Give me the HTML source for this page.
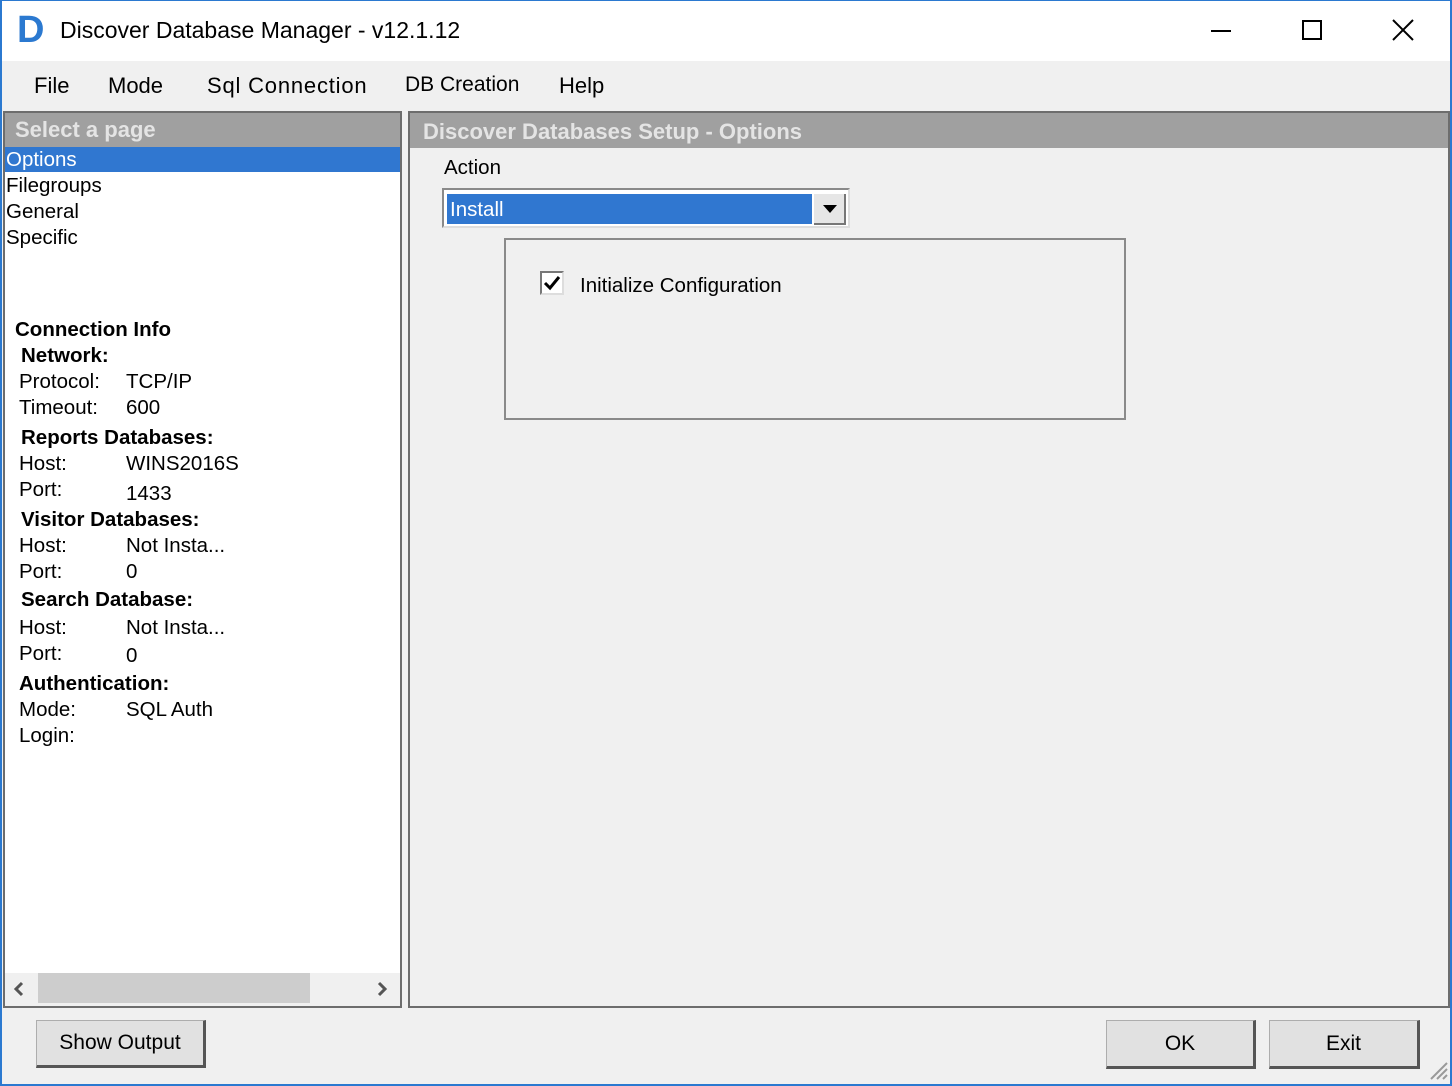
<!DOCTYPE html><html><head><style>
*{margin:0;padding:0;box-sizing:border-box}
body{width:1452px;height:1086px;overflow:hidden;background:#f0f0f0;font-family:"Liberation Sans",sans-serif;color:#000;position:relative}
.a{position:absolute;white-space:nowrap}
.t{font-size:20.5px}
.b{font-weight:bold}
.btn{position:absolute;background:#e1e1e1;border:1px solid #adadad;border-right:3px solid #555;border-bottom:3px solid #555;font-size:21px;text-align:center}
</style></head><body>
<div class="a" style="left:0;top:0;width:1452px;height:1086px;border:2px solid #2b79d0;border-top:1px solid #2b79d0"></div>
<div class="a" style="left:2px;top:1px;width:1448px;height:60px;background:#fff"></div>
<div class="a" style="left:17px;top:10px;font-size:38px;font-weight:bold;color:#2b79d0;line-height:40px">D</div>
<div class="a" style="left:60px;top:17px;font-size:23px">Discover Database Manager - v12.1.12</div>
<div class="a" style="left:1211px;top:30px;width:20px;height:2px;background:#000"></div>
<div class="a" style="left:1302px;top:20px;width:20px;height:20px;border:2px solid #000"></div>
<svg class="a" style="left:1392px;top:19px" width="22" height="22"><path d="M1 1L21 21M21 1L1 21" stroke="#000" stroke-width="2"/></svg>
<div class="a" style="left:34px;top:73px;font-size:22px">File</div>
<div class="a" style="left:108px;top:73px;font-size:22px">Mode</div>
<div class="a" style="left:207px;top:73px;font-size:22px;letter-spacing:0.8px">Sql Connection</div>
<div class="a" style="left:405px;top:73px;font-size:21px">DB Creation</div>
<div class="a" style="left:559px;top:73px;font-size:22px">Help</div>
<!-- left panel -->
<div class="a" style="left:3px;top:111px;width:399px;height:897px;background:#fff;border:2px solid #6d6d6d"></div>
<div class="a" style="left:5px;top:113px;width:395px;height:34px;background:#a0a0a0"></div>
<div class="a b" style="left:15px;top:117px;font-size:22px;color:#e4e4e4">Select a page</div>
<div class="a" style="left:5px;top:147px;width:395px;height:25px;background:#3077d0"></div>
<div class="a t" style="left:6px;top:148px;color:#fff">Options</div>
<div class="a t" style="left:6px;top:174px">Filegroups</div>
<div class="a t" style="left:6px;top:200px">General</div>
<div class="a t" style="left:6px;top:226px">Specific</div>
<div class="a t b" style="left:15px;top:318px">Connection Info</div>
<div class="a t b" style="left:21px;top:344px">Network:</div>
<div class="a t" style="left:19px;top:370px">Protocol:</div><div class="a t" style="left:126px;top:370px">TCP/IP</div>
<div class="a t" style="left:19px;top:396px">Timeout:</div><div class="a t" style="left:126px;top:396px">600</div>
<div class="a t b" style="left:21px;top:426px">Reports Databases:</div>
<div class="a t" style="left:19px;top:452px">Host:</div><div class="a t" style="left:126px;top:452px">WINS2016S</div>
<div class="a t" style="left:19px;top:478px">Port:</div><div class="a t" style="left:126px;top:482px">1433</div>
<div class="a t b" style="left:21px;top:508px">Visitor Databases:</div>
<div class="a t" style="left:19px;top:534px">Host:</div><div class="a t" style="left:126px;top:534px">Not Insta...</div>
<div class="a t" style="left:19px;top:560px">Port:</div><div class="a t" style="left:126px;top:560px">0</div>
<div class="a t b" style="left:21px;top:588px">Search Database:</div>
<div class="a t" style="left:19px;top:616px">Host:</div><div class="a t" style="left:126px;top:616px">Not Insta...</div>
<div class="a t" style="left:19px;top:642px">Port:</div><div class="a t" style="left:126px;top:644px">0</div>
<div class="a t b" style="left:19px;top:672px">Authentication:</div>
<div class="a t" style="left:19px;top:698px">Mode:</div><div class="a t" style="left:126px;top:698px">SQL Auth</div>
<div class="a t" style="left:19px;top:724px">Login:</div>
<div class="a" style="left:5px;top:973px;width:395px;height:33px;background:#f0f0f0"></div>
<div class="a" style="left:38px;top:973px;width:272px;height:30px;background:#cdcdcd"></div>
<svg class="a" style="left:12px;top:980px" width="14" height="18"><path d="M10 3L4 9L10 15" stroke="#555" stroke-width="3" fill="none"/></svg>
<svg class="a" style="left:375px;top:980px" width="14" height="18"><path d="M4 3L10 9L4 15" stroke="#555" stroke-width="3" fill="none"/></svg>
<!-- right panel -->
<div class="a" style="left:408px;top:111px;width:1042px;height:897px;border:2px solid #6d6d6d;background:#f0f0f0"></div>
<div class="a" style="left:410px;top:113px;width:1038px;height:35px;background:#a0a0a0"></div>
<div class="a b" style="left:423px;top:119px;font-size:22px;color:#e4e4e4">Discover Databases Setup - Options</div>
<div class="a t" style="left:444px;top:156px">Action</div>
<div class="a" style="left:442px;top:188px;width:408px;height:40px;background:#fff;border:2px solid #8a8a8a;border-right-color:#ddd;border-bottom-color:#ddd"></div>
<div class="a" style="left:447px;top:194px;width:365px;height:30px;background:#3077d0"></div>
<div class="a t" style="left:450px;top:198px;color:#fff">Install</div>
<div class="a" style="left:814px;top:194px;width:32px;height:31px;background:#e6e6e6;border-right:2px solid #777;border-bottom:2px solid #777"></div>
<svg class="a" style="left:822px;top:204px" width="16" height="10"><path d="M1 1H15L8 9Z" fill="#000"/></svg>
<div class="a" style="left:504px;top:238px;width:622px;height:182px;border:2px solid #8a8a8a"></div>
<div class="a" style="left:540px;top:271px;width:24px;height:24px;background:#fff;border:2px solid #777;border-right-color:#ddd;border-bottom-color:#ddd"></div>
<svg class="a" style="left:543px;top:274px" width="18" height="18"><path d="M2 9L7 14L16 3" stroke="#000" stroke-width="3" fill="none"/></svg>
<div class="a t" style="left:580px;top:274px">Initialize Configuration</div>
<!-- bottom -->
<div class="btn" style="left:36px;top:1020px;width:170px;height:48px;line-height:44px">Show Output</div>
<div class="btn" style="left:1106px;top:1020px;width:150px;height:49px;line-height:46px">OK</div>
<div class="btn" style="left:1269px;top:1020px;width:151px;height:49px;line-height:46px">Exit</div>
<svg class="a" style="left:1426px;top:1058px" width="22" height="22"><path d="M21 5L5 21M21 11L11 21M21 17L17 21" stroke="#999" stroke-width="2"/></svg>
</body></html>
